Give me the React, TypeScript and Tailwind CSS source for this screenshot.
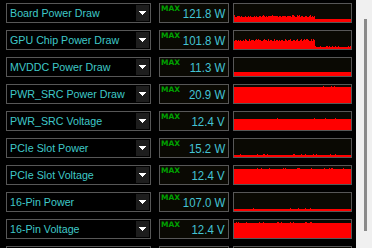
import React from "react";

type Row = { label: string; value: string; gen: (i: number, r: () => number) => number };

function rng(seed: number) {
  let s = seed;
  return () => {
    s = (s * 1103515245 + 12345) % 2147483648;
    return s / 2147483648;
  };
}

const W = 117;
const H = 18;

const rows: Row[] = [
  {
    label: "Board Power Draw",
    value: "121.8 W",
    gen: (i, r) => (i < 81 ? 5 + (r() < 0.35 ? 1 : 0) + (r() < 0.12 ? 1 : 0) : 3),
  },
  {
    label: "GPU Chip Power Draw",
    value: "101.8 W",
    gen: (i, r) => (i < 81 ? 8 + Math.floor(r() * 2.4) : 2 + (r() < 0.25 ? 1 : 0)),
  },
  { label: "MVDDC Power Draw", value: "11.3 W", gen: () => 4 },
  {
    label: "PWR_SRC Power Draw",
    value: "20.9 W",
    gen: (i) => (i === 89 || i === 97 || i === 100 ? 17 : 16),
  },
  { label: "PWR_SRC Voltage", value: "12.4 V", gen: (i, r) => 11 + (r() < 0.05 ? 1 : 0) },
  {
    label: "PCIe Slot Power",
    value: "15.2 W",
    gen: (i, r) => 2 + (r() < 0.06 ? 1 : 0),
  },
  { label: "PCIe Slot Voltage", value: "12.4 V", gen: (i, r) => 15 + (r() < 0.08 ? 1 : 0) },
  {
    label: "16-Pin Power",
    value: "107.0 W",
    gen: (i) => (i === 19 || i === 56 || i === 64 || i === 71 || i === 76 ? 3 : 2),
  },
  {
    label: "16-Pin Voltage",
    value: "12.4 V",
    gen: (i, r) => (i < 82 ? 15 + (r() < 0.2 ? 1 : 0) : 15),
  },
  { label: "", value: "", gen: () => 3 },
];

function Graph({ row, seed }: { row: Row; seed: number }) {
  const r = rng(seed * 7919 + 17);
  let d = `M0 ${H}`;
  for (let i = 0; i < W; i++) {
    const h = Math.min(H, row.gen(i, r));
    d += ` L${i} ${H - h} L${i + 1} ${H - h}`;
  }
  d += ` L${W} ${H} Z`;
  return (
    <div className="w-[119px] h-[20px] border border-[#575757] bg-[#0a0903] shrink-0">
      <svg width={W} height={H} viewBox={`0 0 ${W} ${H}`} className="block" shapeRendering="crispEdges">
        <path d={d} fill="#ff0000" />
      </svg>
    </div>
  );
}

export default function App() {
  return (
    <div className="w-[372px] h-[248px] overflow-hidden flex bg-black">
      <div className="w-[356px] h-full bg-black flex flex-col gap-[7px] pt-[3px] overflow-hidden">
        {rows.map((row, idx) => (
          <div key={idx} className="flex items-start h-[20px] shrink-0">
            <div className="ml-[6px] w-[145px] h-[20px] border border-[#575757] bg-black flex items-center justify-between pl-[3px] pr-[1px] shrink-0">
              <span
                className="text-[10.7px] leading-[18px] text-[#3fc8c8] whitespace-nowrap -mt-[1px]"
                style={{ fontFamily: '"Liberation Sans", Arial, sans-serif' }}
              >
                {row.label}
              </span>
              <div className="w-[13px] h-[16px] bg-[#1d1d1d] flex items-center justify-center">
                <svg width="7" height="4" viewBox="0 0 7 4" shapeRendering="crispEdges">
                  <path d="M0 0 H7 L3.5 4 Z" fill="#ffffff" />
                </svg>
              </div>
            </div>
            <div className="relative ml-[8px] w-[70px] h-[20px] border border-[#575757] bg-[#0a0903] flex items-center justify-end pr-[3px] shrink-0">
              {row.value && (
                <span
                  className="absolute left-[1px] top-[0px] text-[7.5px] leading-[9px] font-bold text-[#00a000]"
                  style={{ fontFamily: '"DejaVu Sans", sans-serif' }}
                >
                  MAX
                </span>
              )}
              <span
                className="text-[13px] leading-[18px] text-[#44c4d4] whitespace-nowrap origin-right scale-x-[0.88] mt-[1px]"
                style={{ fontFamily: '"Liberation Sans", Arial, sans-serif' }}
              >
                {row.value}
              </span>
            </div>
            <div className="ml-[4px]">
              <Graph row={row} seed={idx + 1} />
            </div>
          </div>
        ))}
      </div>
      <div className="w-[16px] h-full bg-[#f0f0f0] flex justify-start pl-[8px] pt-[19px]">
        <div className="w-[3px] h-[212px] bg-[#8a8a8a]" />
      </div>
    </div>
  );
}
